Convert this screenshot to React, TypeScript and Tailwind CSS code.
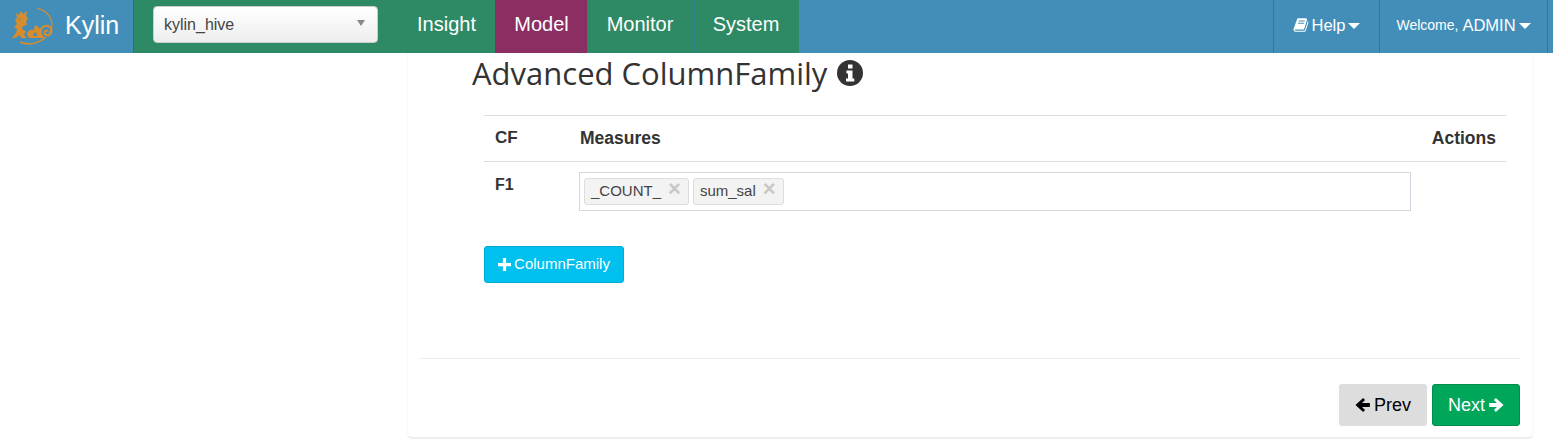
import React from "react";

function KylinLogo() {
  return (
    <svg width="44" height="38" viewBox="0 0 44 38" fill="none" className="shrink-0">
      {/* ring behind the lion */}
      <path d="M27 0.500C36 2 42 9 42 17C42 20 41 23 39 25" stroke="#d98c2b" strokeWidth="1.200" />
      <path d="M36 29C28 36 18 37.500 10 34" stroke="#d98c2b" strokeWidth="1.600" />
      {/* head and chest */}
      <path
        d="M6 5l3 2 2-4 2 3 4-3-1 5 2 2-2 4 1 3-4 1-1 3 4 2-2 4 3 3h-6l-1-3-5 3H2l4-5 1-4-3-2 3-3-2-4 2-2z"
        fill="#d98c2b"
      />
      {/* body */}
      <path d="M17 26c1-4 4-5 7-4l1-5c3 1 5 4 6 6l2 5 1 2H19z" fill="#d98c2b" />
      <path d="M23 26l3-2 1 4h-3z" fill="#438eb9" />
      {/* tail spiral */}
      <path
        d="M31 24c-1-4 3-7 7-6 4 1 5 7 1 9-3 1-5-1-4.500-3 .5-2 3-2 3.500-.5"
        stroke="#d98c2b"
        strokeWidth="2"
      />
      <path d="M9 11l2 1M12 20c2 2 4 3 6 2" stroke="#438eb9" strokeWidth="1" />
    </svg>
  );
}

function BookIcon() {
  return (
    <svg width="16" height="16" viewBox="0 0 1664 1792" fill="currentColor" className="mr-[3px]">
      <path d="M1639 478q40 57 18 129l-275 906q-19 64-76.500 107.500t-122.500 43.500h-923q-77 0-148.500-53.500t-99.500-131.500q-24-67-2-127 0-4 3-27t4-37q1-8-3-21.500t-3-19.500q2-11 8-21t16.500-23.500 16.500-23.500q23-38 45-91.500t30-91.500q3-10 .5-30t-.5-28q3-11 17-28t17-23q21-36 42-92t25-90q1-9-2.500-32t.5-28q4-13 22-30.500t22-22.500q19-26 42.500-84.500t27.500-96.500q1-8-3-25.500t-2-26.500q2-8 9-18t18-23 17-21q8-12 16.500-30.500t15-35 16-36 19.500-32 26.500-23.500 36-11.500 47.500 5.500l-1 3q38-9 51-9h761q74 0 114 56t18 130l-274 906q-36 119-71.500 153.500t-128.500 34.500h-869q-27 0-38 15-11 16-1 43 24 70 144 70h923q29 0 56-15.500t35-41.500l300-987q7-22 5-57 38 15 59 43zm-1064 2q-4 13 2 22.500t20 9.500h608q13 0 25.500-9.500t16.500-22.500l21-64q4-13-2-22.500t-20-9.500h-608q-13 0-25.500 9.500t-16.500 22.500zm-83 256q-4 13 2 22.500t20 9.500h608q13 0 25.500-9.500t16.500-22.500l21-64q4-13-2-22.500t-20-9.500h-608q-13 0-25.500 9.500t-16.500 22.500z" />
    </svg>
  );
}

function Caret() {
  return <span className="ml-[3px] mt-[2px] inline-block border-x-[6px] border-t-[6px] border-x-transparent border-t-white" />;
}

function Arrow({ dir }: { dir: "left" | "right" }) {
  return (
    <svg width="18" height="18" viewBox="0 0 16 16" className={dir === "left" ? "rotate-180" : ""}>
      <path d="M1 6.300h7L5.300 3.500 7 1.700 13.800 8 7 14.300 5.300 12.500 8 9.700H1z" fill="currentColor" />
    </svg>
  );
}

const NAV_ITEMS = [
  { label: "Insight", box: "w-[98px]", active: false },
  { label: "Model", box: "w-[92px]", active: true },
  { label: "Monitor", box: "w-[107px] pr-[2px]", active: false },
  { label: "System", box: "w-[105px] pr-[2px]", active: false },
];

function TagChip({ label }: { label: string }) {
  return (
    <span className="flex h-[27px] items-center rounded-[3px] border border-[#dddddd] bg-[#f3f3f3] pb-[1px] pl-[6px] text-[15px] text-[#444444]">
      {label}
      <span className="ml-[7px] -mt-[5px] pr-[7px] text-[22px] font-bold leading-none text-[#c8c8c8]">×</span>
    </span>
  );
}

export default function App() {
  return (
    <div className="h-[444px] overflow-hidden bg-white font-['Liberation_Sans',Arial,sans-serif] text-[#333333]">
      <nav className="flex h-[53px] bg-[#438eb9] text-white">
        <div className="flex w-[133px] items-center pl-[10px]">
          <KylinLogo />
          <span className="mb-[2px] ml-[11px] text-[25px]">Kylin</span>
        </div>
        <div className="flex w-[264px] items-start border-l border-[#27795a] bg-[#2e8965] pl-[19px] pt-[6px]">
          <div className="flex h-[37px] w-[225px] items-center justify-between rounded border border-[#cccccc] bg-gradient-to-b from-white to-[#eeeeee] pl-[10px] pr-[12px] text-base text-[#444444]">
            kylin_hive
            <span className="mb-[3px] border-x-[4px] border-t-[6px] border-x-transparent border-t-[#888888]" />
          </div>
        </div>
        {NAV_ITEMS.map((item) => (
          <div
            key={item.label}
            className={`flex ${item.box} items-center justify-center border-l pb-[5px] text-xl ${
              item.active ? "border-[#8b2e62] bg-[#8b2e62]" : "border-[#2c7f8f] bg-[#2e8965]"
            }`}
          >
            {item.label}
          </div>
        ))}
        <div className="ml-auto flex">
          <div className="flex w-[106px] items-center justify-center border-l border-[#35759b] pb-[3px] text-[16.500px]">
            <BookIcon />
            Help
            <Caret />
          </div>
          <div className="flex w-[169px] items-center justify-center border-x border-[#35759b] pb-[3px] text-[16.500px]">
            <span className="mr-[4px] text-[14px]">Welcome,</span> ADMIN
            <Caret />
          </div>
          <div className="w-[5px]" />
        </div>
      </nav>

      <main className="ml-[407px] flex h-[386px] w-[1127px] flex-col rounded-b-md border-x border-b-2 border-x-[#f8f8f8] border-b-[#eeeeee] bg-white">
        <h2 className="ml-[64px] mt-[1px] flex items-center font-['Open_Sans',sans-serif] text-[31px] leading-[38px] text-[#333333]">
          Advanced ColumnFamily
          <svg width="26" height="26" viewBox="0 0 26 26" className="ml-[10px]">
            <circle cx="13" cy="13" r="13" fill="#333333" />
            <path d="M11 4.500h4.500v4H11zM9.500 10.500h6v8h1.800v3H9v-3h2v-5H9.500z" fill="#ffffff" />
          </svg>
        </h2>

        <div className="ml-[76px] mr-[27px] mt-[23px]">
          <div className="flex h-[47px] items-center border-y border-[#dddddd] pb-[1px] text-[17.500px] font-bold">
            <span className="ml-[11px] w-[85px] text-[17px]">CF</span>
            <span>Measures</span>
            <span className="ml-auto mr-[10px]">Actions</span>
          </div>
          <div className="flex pt-[10px]">
            <span className="ml-[11px] w-[84px] text-base font-bold leading-[26px]">F1</span>
            <div className="flex h-[39px] w-[832px] items-center gap-[4px] border border-[#d2d6de] pl-[4px]">
              <TagChip label="_COUNT_" />
              <TagChip label="sum_sal" />
            </div>
          </div>
          <button className="mt-[35px] flex h-[37px] w-[140px] items-center justify-center rounded-[3px] border border-[#00acd6] bg-[#00c0ef] text-[15px] text-white">
            <svg width="13" height="13" viewBox="0 0 12 12" className="mr-[3px]">
              <path d="M4.500 0h3v4.500H12v3H7.500V12h-3V7.500H0v-3h4.500z" fill="#ffffff" />
            </svg>
            ColumnFamily
          </button>
        </div>

        <div className="ml-[11px] mr-[13px] mt-[75px] border-t border-[#eeeeee]" />

        <div className="mr-[13px] mt-[25px] flex justify-end gap-[5px]">
          <button className="flex h-[42px] w-[88px] items-center justify-center gap-[3px] rounded-[3px] bg-[#dddddd] pr-[2px] text-lg text-black">
            <Arrow dir="left" />
            Prev
          </button>
          <button className="flex h-[42px] w-[88px] items-center justify-center gap-[3px] rounded-[3px] border border-[#008d4c] bg-[#00a65a] pl-[2px] text-lg text-white">
            Next
            <Arrow dir="right" />
          </button>
        </div>
      </main>
    </div>
  );
}
